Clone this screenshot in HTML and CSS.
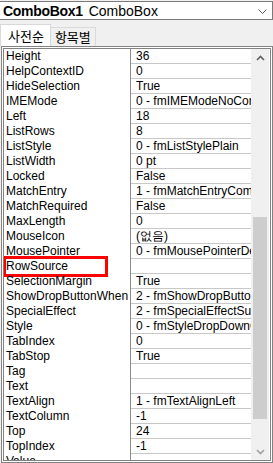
FILE: index.html
```html
<!DOCTYPE html>
<html lang="ko">
<head>
    <meta charset="UTF-8">
    <meta name="viewport" content="width=device-width, initial-scale=1.0">
    <title>Properties - ComboBox1</title>
    <link rel="stylesheet" href="styles.css">
</head>
<body>
    <div class="window">
        <div class="combo">
            <span class="combo-text"><b>ComboBox1</b> ComboBox</span>
            <svg class="combo-arrow" width="9" height="5" viewBox="0 0 9 5">
                <polyline points="0.5,0.5 4.5,4.5 8.5,0.5" fill="none" stroke="#606060" stroke-width="1"/>
            </svg>
        </div>

        <div class="tabs">
            <div class="tab active">사전순</div>
            <div class="tab">항목별</div>
        </div>

        <div class="grid-box">
            <div class="rows">
                <div class="row"><span class="name">Height</span><span class="value">36</span></div>
                <div class="row"><span class="name">HelpContextID</span><span class="value">0</span></div>
                <div class="row"><span class="name">HideSelection</span><span class="value">True</span></div>
                <div class="row"><span class="name">IMEMode</span><span class="value">0 - fmIMEModeNoControl</span></div>
                <div class="row"><span class="name">Left</span><span class="value">18</span></div>
                <div class="row"><span class="name">ListRows</span><span class="value">8</span></div>
                <div class="row"><span class="name">ListStyle</span><span class="value">0 - fmListStylePlain</span></div>
                <div class="row"><span class="name">ListWidth</span><span class="value">0 pt</span></div>
                <div class="row"><span class="name">Locked</span><span class="value">False</span></div>
                <div class="row"><span class="name">MatchEntry</span><span class="value">1 - fmMatchEntryComplete</span></div>
                <div class="row"><span class="name">MatchRequired</span><span class="value">False</span></div>
                <div class="row"><span class="name">MaxLength</span><span class="value">0</span></div>
                <div class="row"><span class="name">MouseIcon</span><span class="value">(없음)</span></div>
                <div class="row"><span class="name">MousePointer</span><span class="value">0 - fmMousePointerDefault</span></div>
                <div class="row"><span class="name">RowSource<i class="mark"></i></span><span class="value"></span></div>
                <div class="row"><span class="name">SelectionMargin</span><span class="value">True</span></div>
                <div class="row"><span class="name">ShowDropButtonWhen</span><span class="value">2 - fmShowDropButtonWhenAlways</span></div>
                <div class="row"><span class="name">SpecialEffect</span><span class="value">2 - fmSpecialEffectSunken</span></div>
                <div class="row"><span class="name">Style</span><span class="value">0 - fmStyleDropDownCombo</span></div>
                <div class="row"><span class="name">TabIndex</span><span class="value">0</span></div>
                <div class="row"><span class="name">TabStop</span><span class="value">True</span></div>
                <div class="row"><span class="name">Tag</span><span class="value"></span></div>
                <div class="row"><span class="name">Text</span><span class="value"></span></div>
                <div class="row"><span class="name">TextAlign</span><span class="value">1 - fmTextAlignLeft</span></div>
                <div class="row"><span class="name">TextColumn</span><span class="value">-1</span></div>
                <div class="row"><span class="name">Top</span><span class="value">24</span></div>
                <div class="row"><span class="name">TopIndex</span><span class="value">-1</span></div>
                <div class="row"><span class="name">Value</span><span class="value"></span></div>
            </div>

            <div class="scrollbar">
                <div class="sb-btn">
                    <svg width="9" height="6" viewBox="0 0 9 6">
                        <polyline points="1,5 4.5,1.5 8,5" fill="none" stroke="#606060" stroke-width="1.6"/>
                    </svg>
                </div>
                <div class="track">
                    <div class="thumb"></div>
                </div>
                <div class="sb-btn">
                    <svg width="9" height="6" viewBox="0 0 9 6">
                        <polyline points="1,1 4.5,4.5 8,1" fill="none" stroke="#a0a0a0" stroke-width="1.6"/>
                    </svg>
                </div>
            </div>
        </div>
    </div>
</body>
</html>
```

FILE: styles.css
```css
html, body {
    margin: 0;
    padding: 0;
}

body {
    background-color: #f0f0f0;
    font-family: "Liberation Sans", Arial, sans-serif;
    font-size: 12px;
    color: #000;
}

.window {
    width: 273px;
    height: 463px;
    overflow: hidden;
    padding-top: 1px;
    box-sizing: border-box;
}

/* object selector at the top */
.combo {
    display: flex;
    align-items: center;
    justify-content: space-between;
    height: 19px;
    box-sizing: border-box;
    width: 273px;
    padding: 0 5px 0 3px;
    background-color: #fff;
    border: 1px solid #7a7a7a;
    border-left: none;
    font-size: 14px;
}

.combo-text {
    white-space: nowrap;
    word-spacing: 2px;
}

.combo-text b {
    font-weight: bold;
    letter-spacing: -0.3px;
}

.combo-arrow {
    margin-top: 2px;
}

/* tabs */
.tabs {
    display: flex;
    align-items: flex-end;
    height: 24px;
    margin-top: 2px;
}

.tab {
    height: 19px;
    padding: 0 4px;
    box-sizing: border-box;
    background-color: #f0f0f0;
    border: 1px solid #d9d9d9;
    border-bottom: none;
    border-left: none;
    font-family: "Noto Sans CJK KR", "Noto Sans", sans-serif;
    font-size: 13px;
    line-height: 18px;
}

.tab.active {
    height: 22px;
    padding: 0 6px 0 7px;
    background-color: #fff;
    border-left: 1px solid #d9d9d9;
    line-height: 21px;
}

/* property grid */
.grid-box {
    display: flex;
    margin-left: 1px;
    width: 272px;
    height: 417px;
    box-sizing: border-box;
    border: 3px double #828282;
    background-color: #fff;
    overflow: hidden;
}

.rows {
    width: 247px;
    flex-shrink: 0;
}

.row {
    display: flex;
    height: 15px;
    box-sizing: border-box;
}

.name {
    position: relative;
    width: 127px;
    flex-shrink: 0;
    box-sizing: border-box;
    padding-left: 2px;
    border-right: 1px solid #8c8c8c;
    line-height: 14px;
    white-space: nowrap;
    overflow: hidden;
}

.name:has(.mark) {
    overflow: visible;
}

.value {
    width: 120px;
    box-sizing: border-box;
    padding-left: 5px;
    border-bottom: 1px solid #c8c8c8;
    line-height: 14px;
    white-space: nowrap;
    overflow: hidden;
}

/* red highlight drawn over the RowSource row */
.mark {
    position: absolute;
    left: -1px;
    top: -3px;
    width: 105px;
    height: 21px;
    box-sizing: border-box;
    border: 3px solid #ff0000;
}

/* vertical scrollbar */
.scrollbar {
    display: flex;
    flex-direction: column;
    width: 18px;
    background-color: #f0f0f0;
}

.sb-btn {
    height: 17px;
    display: flex;
    align-items: center;
    justify-content: center;
}

.track {
    flex: 1;
    padding: 0 2px;
}

.thumb {
    margin-top: 151px;
    height: 202px;
    background-color: #cdcdcd;
}
```
